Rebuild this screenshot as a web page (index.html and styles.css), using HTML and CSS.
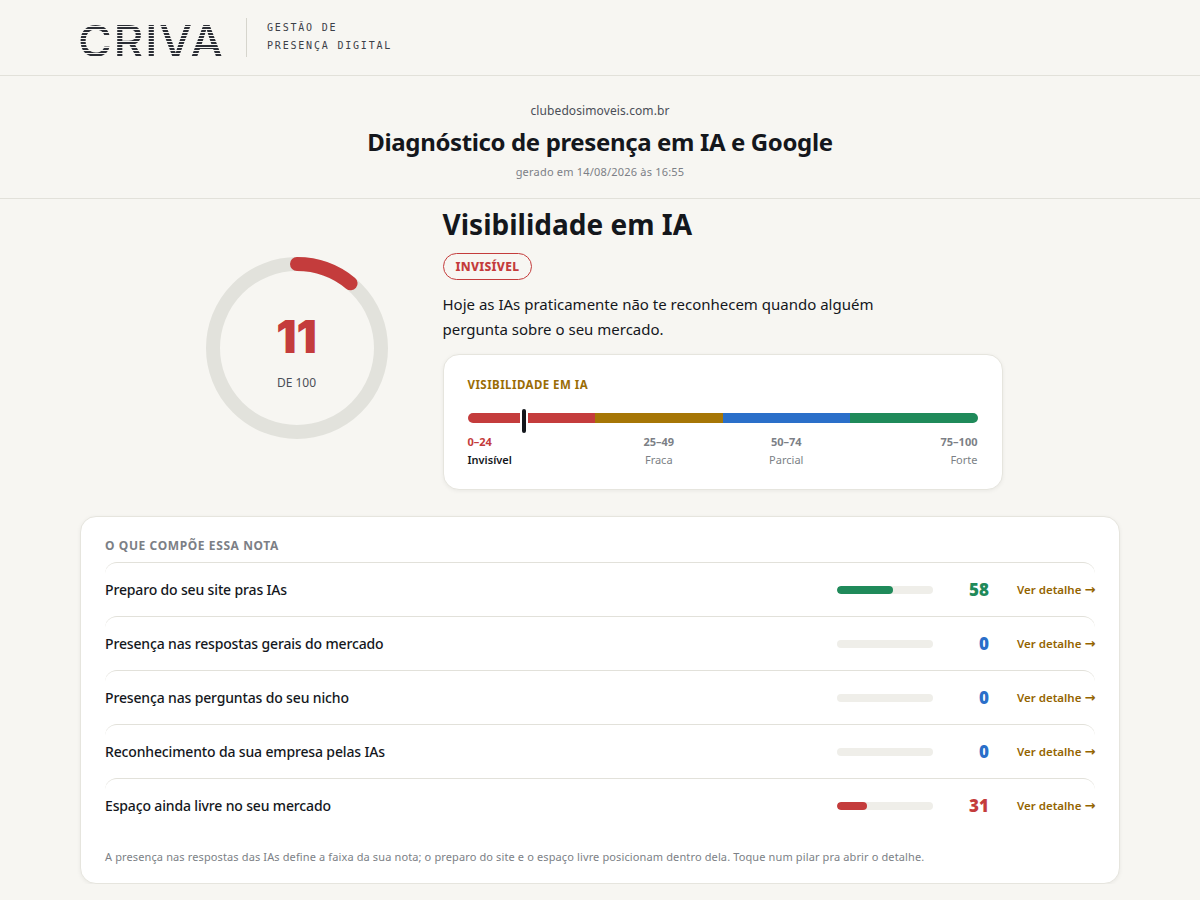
FILE: index.html
```html
<!DOCTYPE html>
<html lang="pt-BR">
<head>
    <meta charset="UTF-8">
    <meta name="viewport" content="width=device-width, initial-scale=1.0">
    <title>Diagnóstico de presença em IA e Google</title>
    <link rel="stylesheet" href="styles.css">
</head>
<body>
    <header class="topbar">
        <div class="logo"><span class="logo-word">CRIVA</span></div>
        <div class="tagline">GESTÃO DE<br>PRESENÇA DIGITAL</div>
    </header>

    <section class="intro">
        <div class="domain">clubedosimoveis.com.br</div>
        <h1>Diagnóstico de presença em IA e Google</h1>
        <div class="generated">gerado em 14/08/2026 às 16:55</div>
    </section>

    <section class="hero">
        <div class="gauge">
            <svg width="182" height="182" viewBox="0 0 182 182">
                <circle cx="91" cy="91" r="84" fill="none" stroke="#e2e2dc" stroke-width="14"/>
                <circle cx="91" cy="91" r="84" fill="none" stroke="#c43c3c" stroke-width="14" stroke-linecap="round" stroke-dasharray="58.06 527.8" transform="rotate(-90 91 91)"/>
            </svg>
            <div class="gauge-label">
                <div class="gauge-value">11</div>
                <div class="gauge-of">DE 100</div>
            </div>
        </div>
        <div class="summary">
            <h2>Visibilidade em IA</h2>
            <span class="badge">INVISÍVEL</span>
            <p class="summary-text">Hoje as IAs praticamente não te reconhecem quando alguém pergunta sobre o seu mercado.</p>
            <div class="scale-card">
                <div class="scale-title">VISIBILIDADE EM IA</div>
                <div class="scale-bar">
                    <span class="seg seg-red"></span>
                    <span class="seg seg-amber"></span>
                    <span class="seg seg-blue"></span>
                    <span class="seg seg-green"></span>
                    <span class="scale-marker" style="left: 11%"></span>
                </div>
                <div class="scale-labels">
                    <div class="scale-item active"><b>0–24</b><span>Invisível</span></div>
                    <div class="scale-item"><b>25–49</b><span>Fraca</span></div>
                    <div class="scale-item"><b>50–74</b><span>Parcial</span></div>
                    <div class="scale-item last"><b>75–100</b><span>Forte</span></div>
                </div>
            </div>
        </div>
    </section>

    <section class="pillars">
        <h3>O QUE COMPÕE ESSA NOTA</h3>
        <div class="pillar">
            <div class="pillar-name">Preparo do seu site pras IAs</div>
            <div class="pillar-track"><div class="pillar-fill fill-green" style="width: 58%"></div></div>
            <div class="pillar-score score-green">58</div>
            <a class="pillar-link">Ver detalhe <span class="arrow">→</span></a>
        </div>
        <div class="pillar">
            <div class="pillar-name">Presença nas respostas gerais do mercado</div>
            <div class="pillar-track"></div>
            <div class="pillar-score score-blue">0</div>
            <a class="pillar-link">Ver detalhe <span class="arrow">→</span></a>
        </div>
        <div class="pillar">
            <div class="pillar-name">Presença nas perguntas do seu nicho</div>
            <div class="pillar-track"></div>
            <div class="pillar-score score-blue">0</div>
            <a class="pillar-link">Ver detalhe <span class="arrow">→</span></a>
        </div>
        <div class="pillar">
            <div class="pillar-name">Reconhecimento da sua empresa pelas IAs</div>
            <div class="pillar-track"></div>
            <div class="pillar-score score-blue">0</div>
            <a class="pillar-link">Ver detalhe <span class="arrow">→</span></a>
        </div>
        <div class="pillar">
            <div class="pillar-name">Espaço ainda livre no seu mercado</div>
            <div class="pillar-track"><div class="pillar-fill fill-red" style="width: 31%"></div></div>
            <div class="pillar-score score-red">31</div>
            <a class="pillar-link">Ver detalhe <span class="arrow">→</span></a>
        </div>
        <p class="pillars-note">A presença nas respostas das IAs define a faixa da sua nota; o preparo do site e o espaço livre posicionam dentro dela. Toque num pilar pra abrir o detalhe.</p>
    </section>
</body>
</html>
```

FILE: styles.css
```css
* {
    margin: 0;
    padding: 0;
    box-sizing: border-box;
}

body {
    font-family: 'Noto Sans', 'Open Sans', sans-serif;
    background: #f7f6f2;
    color: #14171c;
}

.topbar {
    height: 76px;
    padding: 18px 80px 0;
    display: flex;
    align-items: flex-start;
    border-bottom: 1px solid #e2e1da;
}

.logo {
    width: 167px;
    height: 39px;
    border-right: 1px solid #d6d5cd;
}

.logo-word {
    display: block;
    width: 146px;
    margin: 6px 0 0 -2px;
    font-family: 'Inter', sans-serif;
    font-size: 44px;
    font-weight: 500;
    line-height: 34px;
    letter-spacing: 1.5px;
    white-space: nowrap;
    transform: scaleX(1.05);
    transform-origin: left center;
    background: repeating-linear-gradient(180deg, #2b2e35 0, #2b2e35 1.7px, #f7f6f2 1.7px, #f7f6f2 3px);
    -webkit-background-clip: text;
    background-clip: text;
    color: transparent;
}

.tagline {
    margin: 1px 0 0 20px;
    font-family: 'DejaVu Sans Mono', monospace;
    font-size: 10px;
    line-height: 18px;
    letter-spacing: 1.8px;
    color: #3c4048;
}

.intro {
    height: 123px;
    padding-top: 26px;
    text-align: center;
    border-bottom: 1px solid #e2e1da;
}

.domain {
    font-size: 12px;
    line-height: 17px;
    letter-spacing: 0.1px;
    color: #4a4e57;
}

h1 {
    margin-top: 6px;
    font-size: 24px;
    line-height: 34px;
    font-weight: 700;
    letter-spacing: -0.37px;
}

.generated {
    margin-top: 5px;
    font-size: 11px;
    line-height: 15px;
    letter-spacing: 0.2px;
    color: #7c7f86;
}

.hero {
    display: flex;
    justify-content: center;
    align-items: center;
    gap: 55px;
    padding: 7px 0 26px 8px;
}

.gauge {
    position: relative;
    width: 182px;
    height: 182px;
}

.gauge svg {
    display: block;
}

.gauge-label {
    position: absolute;
    inset: 0;
    padding-top: 7px;
    display: flex;
    flex-direction: column;
    align-items: center;
    justify-content: center;
}

.gauge-value {
    font-family: 'Inter', sans-serif;
    font-size: 45px;
    line-height: 50px;
    font-weight: 900;
    letter-spacing: -0.2px;
    color: #c43c3c;
}

.gauge-of {
    margin-top: 13px;
    font-size: 12px;
    line-height: 16px;
    color: #4a4e57;
}

.summary {
    width: 560px;
}

h2 {
    font-size: 28px;
    line-height: 36px;
    font-weight: 700;
}

.badge {
    display: inline-block;
    margin-top: 11px;
    padding: 0 12px;
    height: 27px;
    line-height: 25px;
    border: 1px solid #c43c3c;
    border-radius: 14px;
    font-size: 12px;
    font-weight: 800;
    letter-spacing: 0.3px;
    color: #c43c3c;
}

.summary-text {
    margin-top: 12px;
    max-width: 460px;
    font-size: 15px;
    line-height: 25px;
}

.scale-card {
    margin-top: 12px;
    height: 136px;
    padding: 22px 24px;
    background: #fff;
    border: 1px solid #e6e5de;
    border-radius: 16px;
    box-shadow: 0 1px 4px rgba(0, 0, 0, 0.06);
}

.scale-title {
    font-size: 11.5px;
    line-height: 16px;
    font-weight: 700;
    letter-spacing: 0.45px;
    color: #9a6c04;
}

.scale-bar {
    position: relative;
    display: flex;
    height: 10px;
    margin-top: 20px;
}

.seg {
    flex: 1;
}

.seg-red {
    background: #c43c3c;
    border-radius: 5px 0 0 5px;
}

.seg-amber {
    background: #a67606;
}

.seg-blue {
    background: #2a6fc9;
}

.seg-green {
    background: #1f8a5a;
    border-radius: 0 5px 5px 0;
}

.scale-marker {
    position: absolute;
    top: -4px;
    width: 4px;
    height: 24px;
    margin-left: -2px;
    background: #14171c;
    border-radius: 2px;
    box-shadow: 0 0 0 2px #fff;
}

.scale-labels {
    display: grid;
    grid-template-columns: repeat(4, 1fr);
    margin-top: 10px;
}

.scale-item {
    display: flex;
    flex-direction: column;
    align-items: center;
    font-size: 11px;
    line-height: 17px;
    color: #7c7f86;
}

.scale-item span {
    margin-top: 1px;
}

.scale-item.active {
    align-items: flex-start;
}

.scale-item.active b {
    color: #c43c3c;
}

.scale-item.active span {
    color: #14171c;
    font-weight: 600;
}

.scale-item.last {
    align-items: flex-end;
}

.pillars {
    margin: 0 80px;
    height: 368px;
    padding: 21px 24px 0;
    background: #fff;
    border: 1px solid #e6e5de;
    border-radius: 16px;
    box-shadow: 0 1px 4px rgba(0, 0, 0, 0.06);
}

h3 {
    font-size: 12px;
    line-height: 16px;
    font-weight: 700;
    letter-spacing: 0.6px;
    color: #7c7f86;
}

.pillars h3 {
    margin-bottom: 8px;
}

.pillar {
    display: flex;
    align-items: center;
    height: 54px;
    border-top: 1px solid #e2e1da;
    border-radius: 12px 12px 0 0;
}

.pillar-name {
    flex: 1;
    font-size: 14px;
    font-weight: 500;
    letter-spacing: -0.15px;
}

.pillar-track {
    width: 96px;
    height: 8px;
    background: #efeee9;
    border-radius: 4px;
    overflow: hidden;
}

.pillar-fill {
    height: 100%;
    border-radius: 4px;
}

.fill-green {
    background: #1f8a5a;
}

.fill-red {
    background: #c43c3c;
}

.pillar-score {
    width: 56px;
    font-size: 17px;
    font-weight: 900;
    text-align: right;
}

.score-green {
    color: #1f8a5a;
}

.score-blue {
    color: #2a6fc9;
}

.score-red {
    color: #c43c3c;
}

.pillar-link {
    width: 79px;
    margin-left: 28px;
    margin-right: -1px;
    font-size: 11.5px;
    font-weight: 600;
    color: #946400;
    white-space: nowrap;
}

.arrow {
    font-family: 'DejaVu Sans', sans-serif;
    font-size: 13px;
    line-height: 1;
}

.pillars-note {
    margin-top: 17px;
    font-size: 11px;
    line-height: 16px;
    letter-spacing: 0.125px;
    color: #7c7f86;
}
```
